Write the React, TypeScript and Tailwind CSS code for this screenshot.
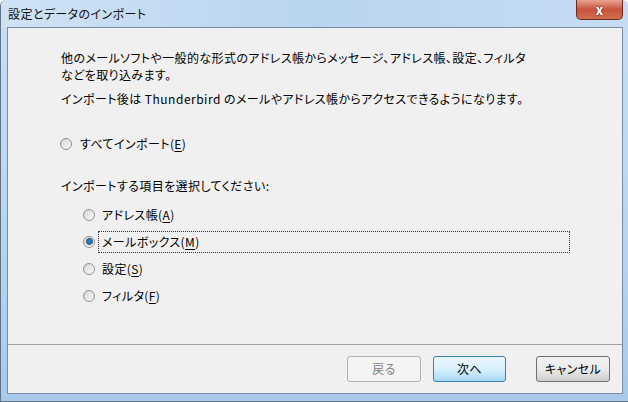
import React from 'react';

const font = { fontFamily: '"Noto Sans CJK JP", "Noto Sans", sans-serif' };

function Radio({ checked }: { checked?: boolean }) {
  return (
    <span className="w-[12px] h-[12px] shrink-0 rounded-full border border-[#8f9296] bg-gradient-to-br from-[#d4d4d4] to-[#fbfbfb] flex items-center justify-center">
      {checked && <span className="w-[7px] h-[7px] rounded-full bg-[#2a7ab8] border border-[#16507e]" />}
    </span>
  );
}

function Label({ text, k }: { text: string; k: string }) {
  return (
    <span>
      {text}(<span className="underline underline-offset-2">{k}</span>)
    </span>
  );
}

const items = [
  { text: 'アドレス帳', k: 'A' },
  { text: 'メールボックス', k: 'M', checked: true },
  { text: '設定', k: 'S' },
  { text: 'フィルタ', k: 'F' },
];

export default function App() {
  return (
    <div
      style={font}
      className="w-[628px] h-[402px] overflow-hidden flex flex-col rounded-t-[6px] border-l border-b border-[#5f7388] bg-gradient-to-b from-[#c8def4] via-[#bcd6f0] to-[#a9c9ea] text-[12px] text-black [font-feature-settings:'palt'] tracking-[0.4px]"
    >
      {/* title bar */}
      <div className="h-[27px] flex items-start justify-between shrink-0 bg-gradient-to-r from-[#cfe2f5] via-[#b9d4ef] to-[#c6dcf3]">
        <div className="pl-[7px] pt-[5px] leading-[17px] text-[#111]">設定とデータのインポート</div>
        <div className="mr-[5px] w-[47px] h-[20px] rounded-b-[5px] border border-t-0 border-[#6b2b22] bg-gradient-to-b from-[#e8a493] via-[#c8523a] to-[#d26f4f] flex items-center justify-center text-white font-bold text-[13px] leading-none [text-shadow:0_0_2px_#3a1d18]">
          x
        </div>
      </div>

      {/* client area */}
      <div className="flex-1 ml-[6px] mr-[5px] mb-[7px] border border-[#7a8da4] bg-[#f0f0f0] flex flex-col">
        <div className="flex-1 pl-[53px] pt-[21px]">
          <p className="leading-[17px]">
            他のメールソフトや一般的な形式のアドレス帳からメッセージ、アドレス帳、設定、フィルタ
            <br />
            などを取り込みます。
          </p>
          <p className="mt-[7px] leading-[17px]">
            インポート後は<span className="tracking-[0.5px]"> Thunderbird </span>のメールやアドレス帳からアクセスできるようになります。
          </p>

          <div className="mt-[28px] h-[17px] flex items-center gap-[8px]">
            <span className="ml-[-1px]">
              <Radio />
            </span>
            <Label text="すべてインポート" k="E" />
          </div>

          <p className="mt-[25px] leading-[17px]">インポートする項目を選択してください:</p>

          <div className="mt-[7px] ml-[22px] flex flex-col">
            {items.map((it) => (
              <div key={it.k} className="h-[27px] flex items-center">
                <Radio checked={it.checked} />
                <div
                  className={
                    it.checked
                      ? 'ml-[3px] h-[22px] w-[472px] pl-[3px] flex items-center border border-dotted border-[#333]'
                      : 'ml-[4px] h-[22px] pl-[3px] flex items-center'
                  }
                >
                  <Label text={it.text} k={it.k} />
                </div>
              </div>
            ))}
          </div>
        </div>

        <div className="h-[49px] shrink-0 border-t border-[#a0a0a0] flex items-center justify-end pr-[12px]">
          <button className="w-[74px] h-[26px] rounded-[3px] border border-[#adb2b5] bg-[#f4f4f4] text-[#838383]">
            戻る
          </button>
          <button className="ml-[12px] w-[73px] h-[26px] rounded-[3px] border border-[#3c7fb1] bg-gradient-to-b from-[#eaf6fd] via-[#d9f0fc] to-[#a7d9f5] text-black">
            次へ
          </button>
          <button className="ml-[30px] w-[74px] h-[26px] rounded-[3px] border border-[#707070] bg-gradient-to-b from-[#f2f2f2] via-[#ebebeb] to-[#cfcfcf] text-black">
            キャンセル
          </button>
        </div>
      </div>
    </div>
  );
}
